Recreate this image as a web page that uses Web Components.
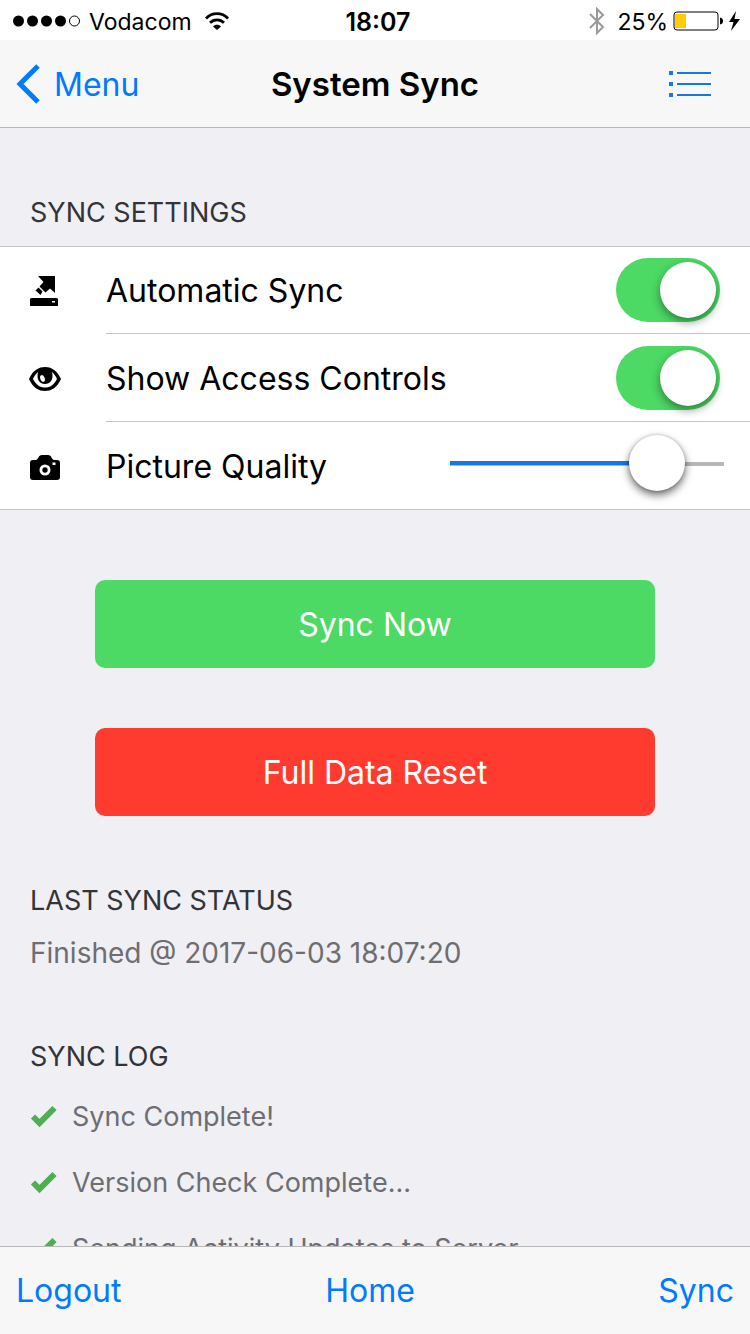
<!DOCTYPE html>
<html lang="en">
<head>
<meta charset="utf-8">
<meta name="viewport" content="width=device-width, initial-scale=1">
<title>System Sync</title>
<style>
  html, body { height: 100%; margin: 0; }
  body {
    font-family: Inter, "Liberation Sans", sans-serif;
    font-size: 32px;
    line-height: 40px;
    color: #000;
    background: #efeff4;
    --accent: #007aff;
    --bar: #f7f7f8;
    --line: #c4c4c8;
    --bar-line: #b8b8bb;
    --muted: #6d6d72;
    --small: 27px;
  }
</style>
</head>
<body>
<sync-app></sync-app>
<script>
const define = (name, html, setup) => {
  const template = document.createElement('template');
  template.innerHTML = html;
  customElements.define(name, class extends HTMLElement {
    constructor() {
      super();
      this.attachShadow({ mode: 'open' }).append(template.content.cloneNode(true));
    }
    connectedCallback() { if (setup) setup(this, this.shadowRoot); }
  });
};

const icons = {
  upload: '<path d="M8 0H25V17L20 12.500L15.500 16.500L9.500 10.500L13.500 6Z"/><path d="M8.500 11.500L12.500 15.500L10.500 19L5.500 14.500Z"/><path fill-rule="evenodd" d="M1 22H27L28 23V30H0V23ZM22 25V26.500H25V25Z"/>',
  eye: '<path fill-rule="evenodd" d="M-1 15C3 6 9 3 15 3S27 6 31 15C27 24 21 27 15 27S3 24 -1 15ZM3 15C6 21 10 23.500 15 23.500S24 21 27 15C26 12 24 10 22 8C24 16 20 20 15 20S6 16 8 8C6 10 4 12 3 15Z"/><ellipse cx="12.500" cy="14.500" rx="2.200" ry="3.500" transform="rotate(-20 12.500 14.500)" fill="#fff"/>',
  camera: '<path fill-rule="evenodd" d="M3 8H6C9 7 8 3 12 3H18C22 3 21 7 24 8H27Q30 8 30 11V25Q30 28 27 28H3Q0 28 0 25V11Q0 8 3 8ZM22.500 10.500V13H25.500V10.500ZM15 12.500A5.500 5.500 0 1 0 15 23.500A5.500 5.500 0 1 0 15 12.500Z"/><circle cx="15" cy="18" r="2.700"/>'
};

define('status-bar', `
  <style>
    :host { display: grid; grid-template-columns: 1fr auto 1fr; align-items: center;
      height: 40px; flex: none; padding: 0 10px 0 12px; background: #fff; font-size: 23px; line-height: 40px; }
    div { display: flex; align-items: center; }
    span, b { padding-top: 2px; }
    .dots { margin-right: 8px; }
    .wifi { margin-left: 12px; }
    b { font-size: 25px; font-weight: 600; padding-left: 4px; }
    .right { justify-content: flex-end; }
    .bt { margin-right: 11px; }
    .battery { margin: 0 5px; }
  </style>
  <div>
    <svg class="dots" width="69" height="14" viewBox="0 0 69 14" aria-label="Signal">
      <circle cx="6.500" cy="7" r="5.500"/><circle cx="20.500" cy="7" r="5.500"/><circle cx="34.500" cy="7" r="5.500"/><circle cx="48.500" cy="7" r="5.500"/>
      <circle cx="62.500" cy="7" r="5" fill="none" stroke="#000"/>
    </svg>
    <span>Vodacom</span>
    <svg class="wifi" width="26" height="20" viewBox="0 0 26 20" fill="none" stroke="#000" stroke-width="2.800" aria-label="Wi-Fi">
      <path d="M2 7.500C8 1 18 1 24 7.500"/><path d="M6 11.800C10 7.800 16 7.800 20 11.800"/><path d="M9 15.500C11 13 15 13 17 15.500L13 19Z" fill="#000" stroke="none"/>
    </svg>
  </div>
  <b>18:07</b>
  <div class="right">
    <svg class="bt" width="18" height="28" viewBox="0 0 18 28" fill="none" stroke="#999" stroke-width="2" aria-label="Bluetooth"><path d="M2 7L15 20L9 26V2L15 8L2 21"/></svg>
    <span>25%</span>
    <svg class="battery" width="50" height="20" viewBox="0 0 50 20" aria-label="Battery"><rect x="1" y="1" width="44" height="18" rx="3" fill="none" stroke="#000"/><rect x="2" y="3" width="11" height="14" fill="#fc0"/><path d="M47 6.500Q50 7 50 10T47 13.500Z"/></svg>
    <svg width="12" height="20" viewBox="0 0 12 20" aria-label="Charging"><path d="M8 0L1 11H5.500L3 20L12 8H6.500Z"/></svg>
  </div>`);

define('nav-bar', `
  <style>
    :host { display: grid; grid-template-columns: 1fr auto 1fr; align-items: center; box-sizing: border-box;
      height: 88px; flex: none; padding: 0 38px 0 16px; background: var(--bar); border-bottom: 1px solid var(--bar-line); }
    a { display: flex; align-items: center; gap: 14px; color: var(--accent); text-decoration: none; }
    span { padding-top: 2px; }
    h1 { margin: 0; padding-left: 22px; font-size: 33px; font-weight: 600; }
    button { justify-self: end; border: 0; padding: 0; background: none; display: flex; }
  </style>
  <a href="#menu"><svg width="24" height="40" viewBox="0 0 24 40" fill="none" stroke="#007aff" stroke-width="5"><path d="M22 2L4 20L22 38"/></svg><span>Menu</span></a>
  <h1><slot></slot></h1>
  <button aria-label="List"><svg width="44" height="28" viewBox="0 0 44 28" fill="#1678e6"><path d="M1 1h4v4h-4zM1 12h4v4h-4zM1 23h4v4h-4zM9 2h34v2h-34zM9 13h34v2h-34zM9 24h34v2h-34z"/></svg></button>`);

define('section-title', `
  <style>
    :host { display: block; padding: 0 30px; color: #333338; }
    h2 { margin: 0; font-size: var(--small); line-height: 36px; font-weight: 400; }
  </style>
  <h2><slot></slot></h2>`);

define('toggle-switch', `
  <style>
    :host { display: flex; }
    input { appearance: none; box-sizing: border-box; width: 104px; height: 64px; margin: 0; padding: 4px; border-radius: 32px; background: #ddd; display: flex; }
    input::before { content: ""; width: 56px; height: 56px; border-radius: 50%; background: #fff; box-shadow: 0 4px 10px rgba(0,0,0,.42); }
    input:checked { background: #4cd964; justify-content: flex-end; }
  </style>
  <input type="checkbox" role="switch" checked>`,
  (host, root) => root.querySelector('input').setAttribute('aria-label', host.getAttribute('label')));

define('range-slider', `
  <style>
    :host { display: flex; padding-bottom: 6px; margin-right: -4px; }
    input { --fill: 80%; appearance: none; width: 274px; height: 56px; margin: 0;
      background: linear-gradient(#1678e6, #1678e6) 0 26px / var(--fill) 4px no-repeat,
                  linear-gradient(#b7b7b7, #b7b7b7) 0 27px / 100% 4px no-repeat; }
    input::-webkit-slider-thumb { appearance: none; width: 56px; height: 56px; border-radius: 50%; background: #fff; box-shadow: 0 4px 8px rgba(0,0,0,.6), 0 0 3px rgba(0,0,0,.2); }
  </style>
  <input type="range" min="0" max="100" value="82">`,
  (host, root) => {
    const input = root.querySelector('input');
    input.setAttribute('aria-label', host.getAttribute('label'));
    input.addEventListener('input', () => input.style.setProperty('--fill', input.value + '%'));
  });

define('setting-row', `
  <style>
    :host { display: flex; height: 88px; padding-left: 30px; }
    svg { width: 30px; height: 30px; overflow: visible; align-self: center; flex: none; margin: 2px 46px 0 0; }
    div { flex: 1; display: flex; align-items: center; justify-content: space-between; padding-right: 30px; border-bottom: 1px solid var(--line); }
    span { padding-top: 2px; }
    :host(:last-of-type) div { border-color: transparent; }
  </style>
  <svg viewBox="0 0 30 30" aria-hidden="true"></svg>
  <div><span></span><slot></slot></div>`,
  (host, root) => {
    root.querySelector('svg').innerHTML = icons[host.getAttribute('icon')];
    root.querySelector('span').textContent = host.getAttribute('label');
  });

define('settings-list', `
  <style>
    :host { display: block; margin-top: 15px; background: #fff; box-shadow: inset 0 1px var(--line), inset 0 -1px var(--line); }
  </style>
  <slot></slot>`);

define('action-button', `
  <style>
    :host { display: block; margin: 0 95px; }
    button { width: 100%; height: 88px; padding: 2px 0 0; border: 0; border-radius: 10px; color: #fff; background: #4cd964; font: inherit; display: block; }
    :host([danger]) button { background: #ff3b30; }
  </style>
  <button type="button"><slot></slot></button>`);

define('log-entry', `
  <style>
    :host { display: flex; align-items: center; gap: 15px; height: 66px; padding: 0 30px; color: var(--muted); font-size: var(--small); line-height: 36px; }
  </style>
  <svg width="27" height="24" viewBox="0 0 27 24" fill="none" stroke="#4caf50" stroke-width="6" aria-hidden="true"><path d="M3 11.500L9.500 18L24.500 3"/></svg>
  <span><slot></slot></span>`);

define('tool-bar', `
  <style>
    :host { display: grid; grid-template-columns: 1fr auto 1fr; align-items: center; box-sizing: border-box;
      height: 88px; flex: none; padding: 0 16px; background: var(--bar); border-top: 1px solid var(--bar-line); }
    a { color: var(--accent); text-decoration: none; }
    a:nth-of-type(2) { padding-right: 10px; }
    a:last-child { justify-self: end; }
  </style>
  <a href="#logout">Logout</a><a href="#home">Home</a><a href="#sync">Sync</a>`);

define('sync-app', `
  <style>
    :host { display: flex; flex-direction: column; height: 100vh; }
    main { flex: 1; min-height: 0; overflow-y: auto; scrollbar-width: none; padding-top: 67px; }
    .actions { display: grid; gap: 60px; padding: 70px 0 67px; }
    p { margin: 16px 30px 68px; color: var(--muted); font-size: 28px; line-height: 36px; }
    .log { padding-top: 9px; }
  </style>
  <status-bar></status-bar>
  <nav-bar>System Sync</nav-bar>
  <main>
    <section-title>SYNC SETTINGS</section-title>
    <settings-list>
      <setting-row icon="upload" label="Automatic Sync"><toggle-switch label="Automatic Sync"></toggle-switch></setting-row>
      <setting-row icon="eye" label="Show Access Controls"><toggle-switch label="Show Access Controls"></toggle-switch></setting-row>
      <setting-row icon="camera" label="Picture Quality"><range-slider label="Picture Quality"></range-slider></setting-row>
    </settings-list>
    <div class="actions">
      <action-button>Sync Now</action-button>
      <action-button danger>Full Data Reset</action-button>
    </div>
    <section-title>LAST SYNC STATUS</section-title>
    <p>Finished @ 2017-06-03 18:07:20</p>
    <section-title>SYNC LOG</section-title>
    <div class="log">
      <log-entry>Sync Complete!</log-entry>
      <log-entry>Version Check Complete...</log-entry>
      <log-entry>Sending Activity Updates to Server</log-entry>
    </div>
  </main>
  <tool-bar></tool-bar>`);
</script>
</body>
</html>
